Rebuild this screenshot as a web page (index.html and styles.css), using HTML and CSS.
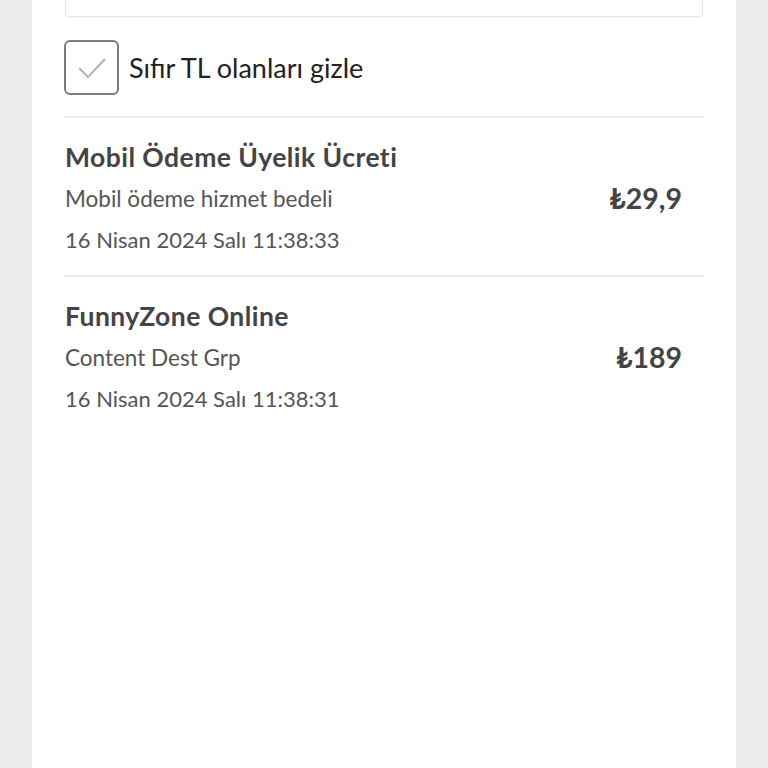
FILE: index.html
```html
<!DOCTYPE html>
<html lang="tr">
<head>
<meta charset="utf-8">
<link rel="stylesheet" href="styles.css">
</head>
<body>
<div class="panel">
  <div class="topcard"></div>
  <label class="check">
    <span class="box">
      <svg width="30" height="24" viewBox="0 0 30 24"><path d="M2 12 L11 21 L28 3" fill="none" stroke="#b5b5b5" stroke-width="2"/></svg>
    </span>
    <span class="check-label">Sıfır TL olanları gizle</span>
  </label>
  <div class="list">
    <div class="item">
      <div class="info">
        <div class="title">Mobil Ödeme Üyelik Ücreti</div>
        <div class="line">Mobil ödeme hizmet bedeli</div>
        <div class="line date">16 Nisan 2024 Salı 11:38:33</div>
      </div>
      <div class="price">₺29,9</div>
    </div>
    <div class="item">
      <div class="info">
        <div class="title">FunnyZone Online</div>
        <div class="line">Content Dest Grp</div>
        <div class="line date">16 Nisan 2024 Salı 11:38:31</div>
      </div>
      <div class="price">₺189</div>
    </div>
  </div>
</div>
</body>
</html>
```
FILE: styles.css
```css
html, body {
  margin: 0;
  padding: 0;
  background: #ebebeb;
  height: 100%;
}
body {
  font-family: Lato, "Noto Sans", "DejaVu Sans", sans-serif;
  color: #333;
}
.panel {
  margin: 0 32px;
  background: #fff;
  min-height: 768px;
  padding: 0 32px;
  box-sizing: border-box;
}
.topcard {
  height: 16px;
  margin: 0 1px;
  border: 1px solid #e6e6e6;
  border-top: none;
  border-radius: 0 0 4px 4px;
  box-shadow: 0 1px 2px rgba(0,0,0,0.05);
}
.check {
  display: flex;
  align-items: center;
  gap: 10px;
  margin-top: 23px;
  padding-bottom: 21px;
  border-bottom: 2px solid #ececec;
}
.box {
  width: 51px;
  height: 51px;
  border: 2px solid #7c7c7c;
  border-radius: 6px;
  display: flex;
  align-items: center;
  justify-content: center;
  flex: none;
}
.check-label {
  font-size: 27px;
  color: #222;
}
.item {
  display: flex;
  align-items: center;
  padding: 18px 22px 15px 1px;
  border-bottom: 2px solid #ececec;
}
.item:last-child { border-bottom: none; }
.info { flex: 1; }
.title {
  font-size: 26.5px;
  font-weight: 700;
  color: #444;
  line-height: 42px;
  letter-spacing: 0.45px;
}
.line {
  font-size: 22.5px;
  color: #555;
  line-height: 41px;
}
.line.date {
  font-size: 22px;
}
.price {
  font-size: 28.5px;
  font-weight: 700;
  color: #444;
}
```
